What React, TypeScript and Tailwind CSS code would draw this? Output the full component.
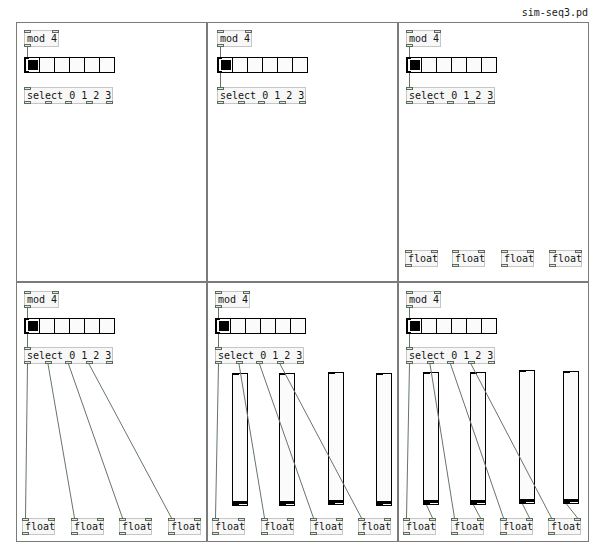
import React from "react";

type Box = { x: number; y: number; w: number; t: string; i: number; o: number };
type Slider = { x: number; y: number; h: number };
type Wire = [number, number, number, number];
type PanelData = {
  ox: number;
  oy: number;
  boxes: Box[];
  radios: { x: number; y: number }[];
  sliders: Slider[];
  wires: Wire[];
};

const mod = (x: number, y: number): Box => ({ x, y, w: 35, t: "mod 4", i: 2, o: 1 });
const sel = (x: number, y: number): Box => ({ x, y, w: 89, t: "select 0 1 2 3", i: 1, o: 5 });
const flt = (x: number, y: number): Box => ({ x, y, w: 33, t: "float", i: 2, o: 1 });

const selWires = (sx: number, sy: number, fxs: number[], fy: number): Wire[] =>
  fxs.map((fx, k) => [sx + 3 + k * 20.5, sy + 17, fx + 3, fy] as Wire);

const f4 = [22, 71, 119, 168];
const f5 = [212, 261, 310, 358];
const f6 = [403, 451, 500, 548];
const s5: Slider[] = [
  { x: 232, y: 373, h: 133 },
  { x: 279, y: 373, h: 133 },
  { x: 328, y: 372, h: 133 },
  { x: 376, y: 373, h: 133 },
];
const s6: Slider[] = [
  { x: 423, y: 372, h: 133 },
  { x: 470, y: 372, h: 133 },
  { x: 519, y: 370, h: 134 },
  { x: 563, y: 371, h: 133 },
];

const panels: PanelData[] = [
  {
    ox: 17,
    oy: 23,
    boxes: [mod(24, 30), sel(24, 87)],
    radios: [{ x: 24, y: 57 }],
    sliders: [],
    wires: [[27, 47, 27, 57]],
  },
  {
    ox: 208,
    oy: 23,
    boxes: [mod(217, 30), sel(217, 87)],
    radios: [{ x: 217, y: 57 }],
    sliders: [],
    wires: [
      [220, 47, 220, 57],
      [220, 73, 220, 87],
    ],
  },
  {
    ox: 399,
    oy: 23,
    boxes: [mod(406, 30), sel(406, 87), flt(405, 250), flt(452, 250), flt(501, 250), flt(549, 250)],
    radios: [{ x: 406, y: 57 }],
    sliders: [],
    wires: [
      [409, 47, 409, 57],
      [409, 73, 409, 87],
    ],
  },
  {
    ox: 17,
    oy: 283,
    boxes: [mod(24, 291), sel(24, 347), ...f4.map((x) => flt(x, 518))],
    radios: [{ x: 24, y: 318 }],
    sliders: [],
    wires: [[27, 308, 27, 318], [27, 334, 27, 347], ...selWires(24, 347, f4, 518)],
  },
  {
    ox: 208,
    oy: 283,
    boxes: [mod(215, 291), sel(215, 347), ...f5.map((x) => flt(x, 518))],
    radios: [{ x: 215, y: 318 }],
    sliders: s5,
    wires: [[218, 308, 218, 318], [218, 334, 218, 347], ...selWires(215, 347, f5, 518)],
  },
  {
    ox: 399,
    oy: 283,
    boxes: [mod(406, 291), sel(406, 347), ...f6.map((x) => flt(x, 518))],
    radios: [{ x: 406, y: 318 }],
    sliders: s6,
    wires: [
      [409, 308, 409, 318],
      [409, 334, 409, 347],
      ...selWires(406, 347, f6, 518),
      ...s6.map((s, k) => [s.x + 3, s.y + s.h, f6[k] + 29, 518] as Wire),
    ],
  },
];

function Port({ left, top, bottom }: { left: number; top?: number; bottom?: number }) {
  return (
    <div
      className="absolute w-[7px] h-[3px] border border-[#5b6c5b] bg-[#e4e8e4]"
      style={{ left, top, bottom }}
    />
  );
}

function Obj({ b, ox, oy }: { b: Box; ox: number; oy: number }) {
  const ins = Array.from({ length: b.i }, (_, k) => (b.i === 1 ? -1 : -1 + (k * (b.w - 7)) / (b.i - 1)));
  const outs = Array.from({ length: b.o }, (_, k) => (b.o === 1 ? -1 : -1 + (k * (b.w - 7)) / (b.o - 1)));
  return (
    <div
      className="absolute h-[17px] border border-[#c6c6c6] bg-[#f7f7f7] pl-[2px] text-[10px] leading-[15px] text-[#141414] whitespace-nowrap"
      style={{ left: b.x - ox, top: b.y - oy, width: b.w }}
    >
      {b.t}
      {ins.map((l, k) => (
        <Port key={"i" + k} left={Math.round(l)} top={-1} />
      ))}
      {outs.map((l, k) => (
        <Port key={"o" + k} left={Math.round(l)} bottom={-1} />
      ))}
    </div>
  );
}

function Radio({ x, y }: { x: number; y: number }) {
  return (
    <div
      className="absolute flex h-[16px] border-l border-t border-b border-black bg-[#fbfbfb]"
      style={{ left: x, top: y }}
    >
      {[0, 1, 2, 3, 4, 5].map((i) => (
        <div key={i} className="flex h-full w-[15px] items-center justify-center border-r border-black">
          {i === 0 && <div className="ml-[1px] h-[10px] w-[10px] bg-black" />}
        </div>
      ))}
      <div className="absolute -left-px -top-px h-[16px] w-[2px] bg-black" />
      <div className="absolute -left-px -top-px h-[2px] w-[5px] bg-black" />
      <div className="absolute -left-px -bottom-px h-[2px] w-[5px] bg-black" />
    </div>
  );
}

function VSlider({ s, ox, oy }: { s: Slider; ox: number; oy: number }) {
  return (
    <div
      className="absolute w-[16px] border border-black bg-[#fbfbfb]"
      style={{ left: s.x - ox, top: s.y - oy, height: s.h }}
    >
      <div className="absolute left-0 right-0 bottom-[1px] h-[3px] bg-black" />
      <div className="absolute -left-px -top-px h-[2px] w-[7px] bg-black" />
      <div className="absolute -left-px -bottom-px h-[2px] w-[7px] bg-black" />
    </div>
  );
}

function Panel({ p }: { p: PanelData }) {
  return (
    <div className="relative overflow-hidden border border-[#7b7b7b] bg-white">
      {p.sliders.map((s, k) => (
        <VSlider key={k} s={s} ox={p.ox} oy={p.oy} />
      ))}
      <svg className="absolute left-0 top-0" width={189} height={258}>
        {p.wires.map(([x1, y1, x2, y2], k) => (
          <line
            key={k}
            x1={x1 - p.ox + 0.5}
            y1={y1 - p.oy}
            x2={x2 - p.ox + 0.5}
            y2={y2 - p.oy}
            stroke="#66756a"
            strokeWidth={1}
          />
        ))}
      </svg>
      {p.radios.map((r, k) => (
        <Radio key={k} x={r.x - p.ox} y={r.y - p.oy} />
      ))}
      {p.boxes.map((b, k) => (
        <Obj key={k} b={b} ox={p.ox} oy={p.oy} />
      ))}
    </div>
  );
}

export default function App() {
  return (
    <div className="h-[554px] w-[600px] bg-white font-['DejaVu_Sans_Mono',monospace] text-[#1a1a1a]">
      <div className="flex h-[22px] justify-end pr-[12px] pt-[6px] text-[10px] leading-[13px]">sim-seq3.pd</div>
      <div className="ml-[16px] grid grid-cols-[191px_191px_191px] grid-rows-[260px_260px]">
        {panels.map((p, k) => (
          <Panel key={k} p={p} />
        ))}
      </div>
    </div>
  );
}
